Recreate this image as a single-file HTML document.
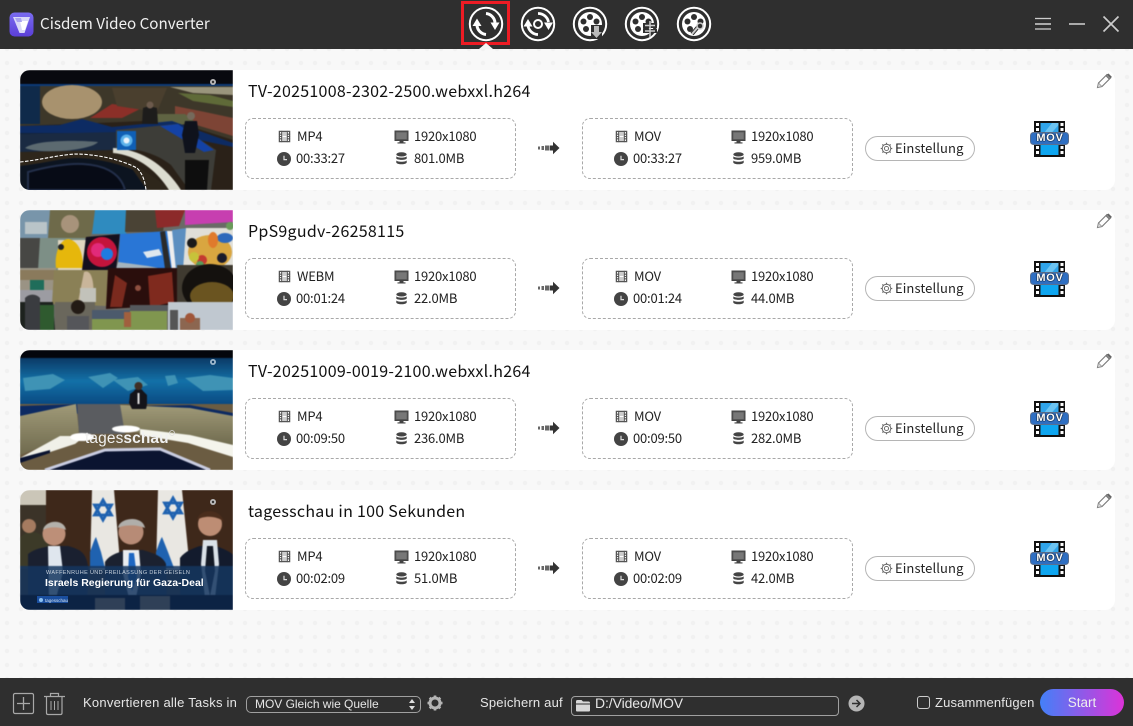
<!DOCTYPE html>
<html><head><meta charset="utf-8"><style>
*{box-sizing:border-box;margin:0;padding:0}
html,body{width:1133px;height:726px;overflow:hidden}
body{position:relative;font-family:"Noto Sans CJK SC","Liberation Sans",sans-serif;color:#222;
background-color:#f8f8f8;background-image:radial-gradient(circle,#f1f1f1 2px,transparent 2.5px);background-size:14px 14px}
.a{position:absolute;white-space:nowrap}
.top{position:absolute;left:0;top:0;width:1133px;height:49px;background:#2f2f2f}
.bot{position:absolute;left:0;top:678px;width:1133px;height:48px;background:#2f2f2f}
.row{position:absolute;left:20px;width:1095px;height:120px;background:#fff;border-radius:10px}
.th{position:absolute;left:0;top:0;width:213px;height:120px;border-radius:10px 0 0 10px;overflow:hidden}
.th svg{display:block}
.bl{filter:blur(.55px)}
.t{position:absolute;left:228px;top:8px;font-size:16px;line-height:24px;color:#111;white-space:nowrap;letter-spacing:.27px}
.box{position:absolute;top:48px;width:271px;height:61px;border:1px dashed #a8a8a8;border-radius:8px}
.i{position:absolute;font-size:13px;line-height:18px;color:#222;white-space:nowrap;letter-spacing:-.2px}
.ic{position:absolute}
.btn{position:absolute;left:845px;top:66px;width:110px;height:25px;border:1px solid #b5b5b5;border-radius:13px;font-size:13px;line-height:22px;padding-left:29px;color:#222;letter-spacing:.1px}
.bt{position:absolute;font-family:"Liberation Sans",sans-serif;font-size:13px;line-height:16px;color:#e6e6e6;white-space:nowrap}
.mv{position:absolute;left:1010px;top:61px;width:40px;text-align:center;font:bold 11px/14px "Liberation Sans",sans-serif;color:#fff;letter-spacing:.7px;text-shadow:0 0 1.500px #000,0 0 1px #000}
</style></head><body>
<svg width="0" height="0" style="position:absolute"><defs>
<symbol id="film" viewBox="0 0 14 14"><path d="M1.500 1.500h11v11h-11z" fill="none" stroke="#555" stroke-width="1.400"/><path d="M1 4.500h3M1 7h3M1 9.500h3M10 4.500h3M10 7h3M10 9.500h3" stroke="#555" stroke-width="1.200"/><path d="M4 1v12M10 1v12" stroke="#555" stroke-width="1.200"/><path d="M4.700 2.200h4.600v4.200H4.700zM4.700 7.600h4.600v4.200H4.700z" fill="#ccc"/></symbol>
<symbol id="clock" viewBox="0 0 14 14"><circle cx="7" cy="7" r="7" fill="#444"/><path d="M7 3.800V7.600H10" stroke="#ddd" stroke-width="1.200" fill="none"/></symbol>
<symbol id="mon" viewBox="0 0 15 14"><path d="M1 1h13v9.500H1z" fill="#555" stroke="#444"/><path d="M2.300 2.400h10.400v6.600H2.300z" fill="#777"/><path d="M5.500 11h4v1.400h2V13.500h-8v-1.100h2z" fill="#444"/></symbol>
<symbol id="db" viewBox="0 0 14 14"><ellipse cx="7" cy="2.600" rx="5.600" ry="2.300" fill="#444"/><path d="M1.400 4.600C2.500 6.600 11.500 6.600 12.600 4.600V7C11.500 9 2.500 9 1.400 7zM1.400 9C2.500 11 11.500 11 12.600 9V11.400C11.500 13.800 2.500 13.800 1.400 11.400z" fill="#444"/></symbol>
<symbol id="arr" viewBox="0 0 22 14"><path d="M0 5.500h2v3H0zM3.500 5h2.500v4H3.500zM7 4.500h4.500V9.500H7z" fill="#666"/><path d="M12 4.500h3V0.800L21.500 7 15 13.200V9.500h-3z" fill="#333"/></symbol>
<symbol id="gear" viewBox="0 0 14 14"><circle cx="7" cy="7" r="4.600" fill="none" stroke="#666" stroke-width="1"/><circle cx="7" cy="7" r="2.200" fill="none" stroke="#666" stroke-width="1"/><path d="M7 .8v1.700M7 11.500v1.700M.8 7h1.700M11.500 7h1.700M2.600 2.600l1.200 1.200M10.200 10.200l1.200 1.200M2.600 11.400l1.200-1.200M10.200 3.800l1.200-1.200" stroke="#666" stroke-width="1.300"/></symbol>
<symbol id="pen" viewBox="0 0 17 16"><path d="M1.500 14.500l1-4.500 8.500-8.500 3.500 3.500-8.500 8.500z" fill="#fff" stroke="#777" stroke-width="1.100"/><path d="M11 1.500l1.500-1 3.500 3.500-1.500 1z" fill="#666"/><path d="M10 2.500l3.500 3.500" stroke="#777" stroke-width="1.500"/><path d="M1.500 14.500l1-4.500 3.500 3.500z" fill="#ddd" stroke="#888" stroke-width=".7"/></symbol>
<symbol id="mov" viewBox="0 0 40 38"><rect x="4" y="1" width="31" height="36" fill="#111"/><rect x="10.500" y="3" width="18" height="10" fill="#2fa4ea"/><path d="M14 13l8-10h6.500v2l-7 8z" fill="#6cc4f2"/><rect x="10.500" y="24" width="18" height="11" fill="#0ea5ef"/><path d="M6 3h3v3H6zM6 8h3v3H6zM30.500 3h3v3h-3zM30.500 8h3v3h-3zM6 26h3v3H6zM6 31h3v3H6zM30.500 26h3v3h-3zM30.500 31h3v3h-3z" fill="#fff"/><rect x=".5" y="12.500" width="38" height="12" rx="3" fill="#2f6fc2" stroke="#5a6f8f"/></symbol>
</defs></svg>

<div class="top"></div>
<svg class="a" style="left:9px;top:12px" width="25" height="25" viewBox="0 0 25 25"><defs><linearGradient id="lg" x1="0" y1="0" x2="0" y2="1"><stop offset="0" stop-color="#7a6cf0"/><stop offset="1" stop-color="#5b3fd8"/></linearGradient></defs><rect x=".5" y=".5" width="24" height="24" rx="5" fill="url(#lg)"/><path d="M4 5h17l-5.500 16h-5z" fill="#d9d9f8"/><path d="M11 9h8l-3 9h-3z" fill="#fff"/><path d="M6 6h6l1 4-5 0z" fill="#a9a4f0"/></svg>
<div class="a" style="left:40px;top:10px;font-size:15.200px;line-height:26px;color:#f0f0f0">Cisdem Video Converter</div>

<div class="a" style="left:461px;top:1px;width:49px;height:44px;border:3px solid #ed1c24"></div>
<svg class="a" style="left:468px;top:6px" width="244" height="36" viewBox="0 0 244 36" fill="none" stroke="#fff">
<circle cx="18" cy="18" r="16.200" stroke-width="2"/>
<path d="M9 19.500A10 10 0 0 0 18 28.500" stroke-width="3"/><path d="M9 12.500l-4.500 7.500h9z" fill="#fff" stroke="none"/>
<path d="M18 7.500A10 10 0 0 1 27 16.500" stroke-width="3"/><path d="M27 24l-4.500-7.500h9z" fill="#fff" stroke="none"/>
<circle cx="70" cy="18" r="16.200" stroke-width="2"/><circle cx="70" cy="18" r="4" stroke-width="2"/>
<path d="M60 20A10.500 10.500 0 0 0 70 28.500" stroke-width="2.800"/><path d="M60 13l-4.500 7.500h9z" fill="#fff" stroke="none"/>
<path d="M70 7.500A10.500 10.500 0 0 1 80.500 16" stroke-width="2.800"/><path d="M80.500 24l-4.500-7.500h9z" fill="#fff" stroke="none"/>
<circle cx="122" cy="18" r="16.200" stroke-width="2"/><circle cx="122" cy="18" r="12" fill="#fff" stroke="none"/><g fill="#2f2f2f" stroke="none"><circle cx="122" cy="11" r="3"/><circle cx="115.500" cy="15.500" r="3"/><circle cx="128.500" cy="15.500" r="3"/><circle cx="118" cy="23" r="3"/><circle cx="126" cy="23" r="3"/></g>
<path d="M123 19h11v14h-11z" fill="#2f2f2f" stroke="none"/><path d="M126 20h5v6h3l-5.500 6-5.500-6h3z" fill="#bbb" stroke="none"/>
<circle cx="174" cy="18" r="16.200" stroke-width="2"/><circle cx="174" cy="18" r="12" fill="#fff" stroke="none"/><g fill="#2f2f2f" stroke="none"><circle cx="174" cy="11" r="3"/><circle cx="167.500" cy="15.500" r="3"/><circle cx="180.500" cy="15.500" r="3"/><circle cx="170" cy="23" r="3"/><circle cx="178" cy="23" r="3"/></g>
<path d="M175 17h14v5h-14zM175 23h14v4h-14z" fill="#2f2f2f" stroke="none"/><path d="M182 15v16M177 19.500h10M177 25h10" stroke="#ccc" stroke-width="1.500"/>
<circle cx="226" cy="18" r="16.200" stroke-width="2"/><circle cx="226" cy="18" r="12" fill="#fff" stroke="none"/><g fill="#2f2f2f" stroke="none"><circle cx="226" cy="11" r="3"/><circle cx="219.500" cy="15.500" r="3"/><circle cx="232.500" cy="15.500" r="3"/><circle cx="222" cy="23" r="3"/></g>
<path d="M224 28l6-7" stroke="#2f2f2f" stroke-width="4"/><path d="M224 28l6-7" stroke="#ccc" stroke-width="2"/><circle cx="232" cy="20" r="3" stroke="#ccc" stroke-width="1.500" fill="#2f2f2f"/>
</svg>
<svg class="a" style="left:479px;top:43px" width="14" height="6"><path d="M0 6L7 0l7 6z" fill="#f4f4f4"/></svg>
<svg class="a" style="left:1030px;top:14px" width="95" height="20" viewBox="0 0 95 20" fill="none" stroke="#bbb">
<path d="M5 4.500h16" stroke-width="1.300" stroke="#ccc"/><path d="M5 10h16" stroke-width="2" stroke="#aaa"/><path d="M5 15h16" stroke-width="1.300" stroke="#ccc"/>
<path d="M39 10h16" stroke-width="2" stroke="#aaa"/><path d="M73.500 2.500l15 15M88.500 2.500l-15 15" stroke-width="1.700" stroke="#ccc"/></svg>

<!-- ROW 1 -->
<div class="row" style="top:70px">
<div class="th"><svg width="213" height="120" viewBox="0 0 213 120"><g class="bl">
<rect width="213" height="120" fill="#2a2118"/><rect width="213" height="15" fill="#08090f"/><rect y="14" width="213" height="2" fill="#0c3a78"/>
<path d="M0 16h213v54L150 50 0 56z" fill="#3d3729"/>
<rect y="16" width="20" height="38" fill="#0f2a4a"/>
<ellipse cx="52" cy="32" rx="30" ry="17" fill="#a8926e"/><path d="M70 48l22-14 30 4-20 10z" fill="#8b2f28"/><path d="M92 18l55 0-10 24-40-6z" fill="#4a3f2e"/>
<path d="M150 17h63v8l-40-2z" fill="#9a957d"/><path d="M158 23l32 2 23 6v6l-40-6z" fill="#5f6a38"/><path d="M155 36l30 6 28 6v18l-40-12-18-6z" fill="#7d4435"/>
<path d="M125 44l40 0 10 8-30 6z" fill="#5f6342"/>
<path d="M0 56l40-1 22-6 30 8 60-6 61 22v4L140 62 0 64z" fill="#0d2b63"/>
<rect y="63" width="98" height="20" fill="#12223a"/>
<path d="M0 64l100-2-3 18-97 2z" fill="#1a2a42"/><path d="M5 78c10-8 50-8 73-6-6 8-55 13-73 6z" fill="#5c6a70"/>
<path d="M0 82l93-2 60 40H0z" fill="#2e261b"/>
<path d="M96 60l60-6 40 26-5 40h-22l-18-25c-15-12-35-17-55-17z" fill="#3d3d38"/><path d="M140 56l18-2 36 26-10 2z" fill="#1442a5"/>
<path d="M93 78c25 1 50 14 68 42h-12c-14-22-34-35-56-37z" fill="#dcdcd0"/>
<path d="M165 90h24l-2 30h-22z" fill="#0e0e0e"/>
<rect x="97" y="61" width="19" height="19" fill="#0f5fb5"/><circle cx="106.500" cy="70.500" r="6" fill="#5cb2ea"/><circle cx="106.500" cy="70.500" r="3" fill="#e8f3fb"/>
<path d="M123 38l6-2 8 2 1 16h-16z" fill="#1d1c1b"/><circle cx="130" cy="35" r="3.500" fill="#6c5a4c"/>
<path d="M165 51h12l2 14-4 18h-10l-3-18z" fill="#0f121c"/><circle cx="171" cy="46" r="4" fill="#756a5c"/>
<path d="M0 96c20-2 38-7 55-8 20 0 42 5 58 12l14 20H0z" fill="#0c1420"/>
<path d="M8 102c18-5 40-9 55-8 18 1 37 7 42 26H8z" fill="#070b16" stroke="#232f4a" stroke-width="2"/>
</g>
<path d="M0 92c20-2 38-7 55-8 20 0 45 5 62 14 6 6 8 14 9 22" fill="none" stroke="#fff" stroke-width="1.100" stroke-dasharray="3.500 1.500"/>
<circle cx="193" cy="12" r="3" fill="#b8b8b8"/><circle cx="193" cy="12" r="1.200" fill="#333"/>
</svg></div>
<div class="t">TV-20251008-2302-2500.webxxl.h264</div>
<svg class="ic" style="left:1076px;top:3px" width="17" height="16"><use href="#pen"/></svg>
<div class="box" style="left:225px"></div><div class="box" style="left:562px"></div>
<svg class="ic" style="left:258px;top:60px" width="13" height="13"><use href="#film"/></svg><div class="i" style="left:277px;top:57px">MP4</div>
<svg class="ic" style="left:374px;top:60px" width="15" height="14"><use href="#mon"/></svg><div class="i" style="left:394px;top:57px">1920x1080</div>
<svg class="ic" style="left:257px;top:82px" width="14" height="14"><use href="#clock"/></svg><div class="i" style="left:276px;top:79px">00:33:27</div>
<svg class="ic" style="left:375px;top:82px" width="13" height="13"><use href="#db"/></svg><div class="i" style="left:394px;top:79px">801.0MB</div>
<svg class="ic" style="left:518px;top:71px" width="22" height="14"><use href="#arr"/></svg>
<svg class="ic" style="left:595px;top:60px" width="13" height="13"><use href="#film"/></svg><div class="i" style="left:614px;top:57px">MOV</div>
<svg class="ic" style="left:711px;top:60px" width="15" height="14"><use href="#mon"/></svg><div class="i" style="left:731px;top:57px">1920x1080</div>
<svg class="ic" style="left:594px;top:82px" width="14" height="14"><use href="#clock"/></svg><div class="i" style="left:613px;top:79px">00:33:27</div>
<svg class="ic" style="left:712px;top:82px" width="13" height="13"><use href="#db"/></svg><div class="i" style="left:731px;top:79px">959.0MB</div>
<div class="btn">Einstellung<svg class="ic" style="left:14px;top:5px" width="13" height="13"><use href="#gear"/></svg></div>
<svg class="ic" style="left:1010px;top:50px" width="40" height="38"><use href="#mov"/></svg><div class="mv">MOV</div>
</div>

<!-- ROW 2 -->
<div class="row" style="top:210px">
<div class="th"><svg width="213" height="120" viewBox="0 0 213 120"><g class="bl">
<rect width="213" height="120" fill="#6a6a66"/>
<path d="M0 0h32v28H0z" fill="#7895aa"/><path d="M5 12h22v12H5z" fill="#b9c4c8"/><path d="M30 0h48l-8 28H28z" fill="#6e6a4a"/><ellipse cx="50" cy="14" rx="9" ry="9" fill="#a8937b"/><path d="M75 0h33l-2 24H72z" fill="#2f8bbf"/><path d="M106 0h40l-3 22h-38z" fill="#4a4335"/><path d="M135 0h30l-6 16-22 2z" fill="#8c2a2a"/><path d="M165 0h48v12l-48 3z" fill="#c73fb0"/>
<path d="M0 28h22l-3 32H0z" fill="#474744"/><path d="M20 28h45v32H18z" fill="#7d8f86"/><path d="M38 30h28v30H38z" fill="#dfd6c0"/><path d="M36 58c-2-16 5-30 13-29 11 3 14 16 14 29z" fill="#e6b70c"/><circle cx="41" cy="37" r="3" fill="#222"/>
<path d="M66 27l34-3-4 36-34 0z" fill="#14101e"/><circle cx="82" cy="42" r="15" fill="#c4143c"/><circle cx="78" cy="40" r="7" fill="#e12a7a"/><circle cx="87" cy="44" r="6" fill="#1f7be0"/>
<path d="M100 24l48-3 4 39H98z" fill="#2976d6"/><path d="M98 52l30 4 20 4H96z" fill="#a5b4bd"/><path d="M123 42l16-3 3 6-15 3z" fill="#dfe8ee"/><path d="M140 22l5-1 6 38h-6z" fill="#2a2a2a"/><path d="M147 21h6l4 39h-5z" fill="#eee"/><path d="M152 20l15-2-2 42h-9z" fill="#5c8fc0"/>
<path d="M166 18h47v42h-50z" fill="#e0dfd8"/><ellipse cx="190" cy="42" rx="22" ry="17" fill="#d9a640"/><ellipse cx="205" cy="28" rx="8" ry="5" fill="#2d68bb"/><circle cx="172" cy="33" r="5" fill="#1a1a1a"/><circle cx="182" cy="50" r="5" fill="#c43a30"/><circle cx="202" cy="48" r="5" fill="#1a1a2a"/><ellipse cx="193" cy="30" rx="5" ry="8" fill="#e07a2c"/><circle cx="174" cy="47" r="5" fill="#c7c33a"/><circle cx="180" cy="55" r="4" fill="#5a9a5a"/><circle cx="210" cy="16" r="4" fill="#6a9a5a"/>
<path d="M0 58h36v36H0z" fill="#9a9384"/><path d="M0 60h36v10H0z" fill="#8a7a5c"/><path d="M10 70h14v10H10z" fill="#1f6d5a"/><path d="M0 80h36v14H0z" fill="#9c9ca2"/>
<path d="M34 60h56l-4 36-54-2z" fill="#8a8056"/><path d="M64 62c7-3 11 8 9 30H58z" fill="#c9b59a"/><path d="M60 78h16v14H60z" fill="#c2c2ba"/>
<path d="M88 58h72v37l-74 4z" fill="#2a0e0c"/><path d="M95 65l12 8-5 24H90z" fill="#7a2a1e"/><path d="M128 66l24-4 2 30-24 5z" fill="#7f2a1e"/><circle cx="118" cy="78" r="3" fill="#8f5040"/>
<path d="M157 55h56v50h-56z" fill="#3f3a30"/><ellipse cx="190" cy="78" rx="28" ry="24" fill="#14110e"/><ellipse cx="192" cy="86" rx="22" ry="14" fill="#6a5420"/>
<path d="M0 92h33l2 28H0z" fill="#1d221e"/><path d="M5 88a10 10 0 0 1 15 0v32H5z" fill="#3a3c40"/><path d="M20 95h14v25H20z" fill="#2f5a2f"/>
<path d="M35 92h40v28H35z" fill="#6a675c"/><circle cx="58" cy="97" r="7" fill="#231b15"/><path d="M47 106h22v14H47z" fill="#55565a"/>
<path d="M72 100h75v20H72z" fill="#80964f"/><path d="M72 100h38v9H72z" fill="#4c5a6c"/><path d="M110 95h40v6h-40z" fill="#55585c"/><rect x="104" y="102" width="7" height="15" fill="#a0603e"/>
<path d="M148 92h65v28h-65z" fill="#c0c8d0"/><path d="M150 100h8v20h-8z" fill="#555"/><path d="M160 108h20v12h-20z" fill="#8c6650"/><circle cx="170" cy="108" r="5" fill="#a0563a"/>
</g></svg></div>
<div class="t">PpS9gudv-26258115</div>
<svg class="ic" style="left:1076px;top:3px" width="17" height="16"><use href="#pen"/></svg>
<div class="box" style="left:225px"></div><div class="box" style="left:562px"></div>
<svg class="ic" style="left:258px;top:60px" width="13" height="13"><use href="#film"/></svg><div class="i" style="left:277px;top:57px">WEBM</div>
<svg class="ic" style="left:374px;top:60px" width="15" height="14"><use href="#mon"/></svg><div class="i" style="left:394px;top:57px">1920x1080</div>
<svg class="ic" style="left:257px;top:82px" width="14" height="14"><use href="#clock"/></svg><div class="i" style="left:276px;top:79px">00:01:24</div>
<svg class="ic" style="left:375px;top:82px" width="13" height="13"><use href="#db"/></svg><div class="i" style="left:394px;top:79px">22.0MB</div>
<svg class="ic" style="left:518px;top:71px" width="22" height="14"><use href="#arr"/></svg>
<svg class="ic" style="left:595px;top:60px" width="13" height="13"><use href="#film"/></svg><div class="i" style="left:614px;top:57px">MOV</div>
<svg class="ic" style="left:711px;top:60px" width="15" height="14"><use href="#mon"/></svg><div class="i" style="left:731px;top:57px">1920x1080</div>
<svg class="ic" style="left:594px;top:82px" width="14" height="14"><use href="#clock"/></svg><div class="i" style="left:613px;top:79px">00:01:24</div>
<svg class="ic" style="left:712px;top:82px" width="13" height="13"><use href="#db"/></svg><div class="i" style="left:731px;top:79px">44.0MB</div>
<div class="btn">Einstellung<svg class="ic" style="left:14px;top:5px" width="13" height="13"><use href="#gear"/></svg></div>
<svg class="ic" style="left:1010px;top:50px" width="40" height="38"><use href="#mov"/></svg><div class="mv">MOV</div>
</div>

<!-- ROW 3 -->
<div class="row" style="top:350px">
<div class="th"><svg width="213" height="120" viewBox="0 0 213 120"><defs><linearGradient id="w3" x1="0" y1="0" x2="0" y2="1"><stop offset="0" stop-color="#0b3a66"/><stop offset=".5" stop-color="#1371a8"/><stop offset="1" stop-color="#0a4a82"/></linearGradient><linearGradient id="d3" x1="0" y1="0" x2="0" y2="1"><stop offset="0" stop-color="#a09a78"/><stop offset="1" stop-color="#6f6a4e"/></linearGradient></defs><g class="bl">
<rect width="213" height="120" fill="#6b5c42"/><rect width="213" height="8" fill="#04060c"/><rect y="8" width="213" height="46" fill="url(#w3)"/>
<path d="M3 28l30-4 12 6-15 9-25 2zM68 27l22-4 8 5-15 10zM93 30l25-3 10 8-20 6zM165 28l25-3 23 3v12l-30 1zM145 26l10-1 3 8-10 3z" fill="#3f93b5"/>
<path d="M0 56l60-2 60 2 50-1 43 8v8L150 60 0 66z" fill="#0c2a62"/>
<path d="M0 66l56-12 3 28L0 105z" fill="url(#d3)"/><path d="M100 55l70 3 43 8v30L100 80z" fill="url(#d3)"/>
<path d="M57 54h43l5 30H59z" fill="#5a5c60"/>
<path d="M0 108l40-22 25 0-10 8L0 112z" fill="#f0f0e8"/><ellipse cx="62" cy="87" rx="12" ry="4" fill="#fff"/><ellipse cx="106" cy="79" rx="14" ry="3.500" fill="#fff"/>
<path d="M120 79l50 6 43 10v12l-45-14-48-8z" fill="#f4f4ec"/>
<path d="M0 112l55-18 50-2 60 4 48 18v6H0z" fill="#6b5c42"/>
<path d="M0 108l30-8 0 3-30 10zM25 120l60-20 55-1 50 21z" fill="#0b1430"/><path d="M25 120l60-20 55-1 50 21" fill="none" stroke="#c9cce0" stroke-width="3"/>
<path d="M114 41c1-3 8-3 9 0l4 4v10l-1 4h-14l-3-6 1-9z" fill="#14141a"/><circle cx="118.500" cy="36" r="4" fill="#3f2f26"/><path d="M117.500 43h2v11h-2z" fill="#ddd"/>
</g>
<circle cx="193" cy="12" r="3" fill="#9fb8cc"/><circle cx="193" cy="12" r="1.200" fill="#0c3a66"/>
<text x="65" y="93" font-family="Liberation Sans,sans-serif" font-size="15.500" fill="#f0f0f0" letter-spacing=".1">tages<tspan font-weight="bold">schau</tspan></text>
<circle cx="152" cy="83" r="2.500" fill="none" stroke="#dfdfdf" stroke-width=".7"/>
</svg></div>
<div class="t">TV-20251009-0019-2100.webxxl.h264</div>
<svg class="ic" style="left:1076px;top:3px" width="17" height="16"><use href="#pen"/></svg>
<div class="box" style="left:225px"></div><div class="box" style="left:562px"></div>
<svg class="ic" style="left:258px;top:60px" width="13" height="13"><use href="#film"/></svg><div class="i" style="left:277px;top:57px">MP4</div>
<svg class="ic" style="left:374px;top:60px" width="15" height="14"><use href="#mon"/></svg><div class="i" style="left:394px;top:57px">1920x1080</div>
<svg class="ic" style="left:257px;top:82px" width="14" height="14"><use href="#clock"/></svg><div class="i" style="left:276px;top:79px">00:09:50</div>
<svg class="ic" style="left:375px;top:82px" width="13" height="13"><use href="#db"/></svg><div class="i" style="left:394px;top:79px">236.0MB</div>
<svg class="ic" style="left:518px;top:71px" width="22" height="14"><use href="#arr"/></svg>
<svg class="ic" style="left:595px;top:60px" width="13" height="13"><use href="#film"/></svg><div class="i" style="left:614px;top:57px">MOV</div>
<svg class="ic" style="left:711px;top:60px" width="15" height="14"><use href="#mon"/></svg><div class="i" style="left:731px;top:57px">1920x1080</div>
<svg class="ic" style="left:594px;top:82px" width="14" height="14"><use href="#clock"/></svg><div class="i" style="left:613px;top:79px">00:09:50</div>
<svg class="ic" style="left:712px;top:82px" width="13" height="13"><use href="#db"/></svg><div class="i" style="left:731px;top:79px">282.0MB</div>
<div class="btn">Einstellung<svg class="ic" style="left:14px;top:5px" width="13" height="13"><use href="#gear"/></svg></div>
<svg class="ic" style="left:1010px;top:50px" width="40" height="38"><use href="#mov"/></svg><div class="mv">MOV</div>
</div>

<!-- ROW 4 -->
<div class="row" style="top:490px">
<div class="th"><svg width="213" height="120" viewBox="0 0 213 120"><g class="bl">
<rect width="213" height="120" fill="#3e281a"/><rect width="26" height="15" fill="#cbc6b8"/><rect y="15" width="26" height="40" fill="#3b3328"/>
<path d="M72 0h22l5 60v20H70z" fill="#e9e7e2"/><path d="M70 78V62c3-8 4-12 6-15l5 15 4 16z" fill="#1f62b0"/>
<path d="M138 0h24l6 60v20h-32z" fill="#e9e7e2"/><path d="M136 78V62c3-8 4-12 6-15l6 15 6 16z" fill="#1f62b0"/>
<g fill="none" stroke="#1f62b0" stroke-width="2.800"><path d="M83 10l8.500 15h-17zM83 30l-8.500-15h17z"/><path d="M153 8l8.500 15h-17zM153 28l-8.500-15h17z"/></g>
<path d="M0 48c5-8 18-8 25 0l4 6-8 25H0z" fill="#3c3a28"/><circle cx="9" cy="36" r="7" fill="#a57b60"/>
<path d="M8 64c8-6 14-6 22-8l18 0c10 3 18 5 20 20l-1 44H8z" fill="#1a2030"/><circle cx="34" cy="44" r="11.500" fill="#bd8f78"/><path d="M23 40c2-10 21-12 23 0-5-3-17-4-23 0z" fill="#b3b0aa"/><path d="M28 56h12l3 26-8 30h-6z" fill="#dfe6ee"/>
<path d="M85 72c5-8 15-10 22-12h16c10 3 20 6 23 14l1 46H85z" fill="#1b2130"/><circle cx="111" cy="42" r="12.500" fill="#b78b76"/><path d="M98 38c1-11 25-13 27 0-6-3-20-4-27 0z" fill="#b0aeaa"/><path d="M103 60h16l2 24-6 28h-5l-7-28z" fill="#e9ecf0"/><path d="M109 63h5l3 24-5 14-4-14z" fill="#1d66c2"/>
<path d="M160 68c5-7 14-10 20-12h16c8 3 15 6 17 9v55h-53z" fill="#131b2d"/><circle cx="190" cy="34" r="12" fill="#bd8d74"/><path d="M177 30c2-12 24-12 27 2-6-6-20-7-27-2z" fill="#4a2d1c"/><path d="M183 50h14l2 24-4 34h-10l-4-34z" fill="#dbe2e8"/><path d="M187 56h6l2 25-5 25-5-25z" fill="#141a26"/>
<rect y="76" width="213" height="29" fill="#15365f" opacity=".85"/><rect y="105" width="213" height="15" fill="#0c2344"/>
<path d="M75 108h30v12H75zM120 106h30v14h-30z" fill="#2f4057"/>
</g>
<text x="26" y="84" font-family="Liberation Sans,sans-serif" font-size="5.500" fill="#c7d1dc" letter-spacing=".35">WAFFENRUHE UND FREILASSUNG DER GEISELN</text>
<text x="25" y="96" font-family="Liberation Sans,sans-serif" font-weight="bold" font-size="10.500" fill="#fff">Israels Regierung für Gaza-Deal</text>
<rect x="17" y="106" width="31" height="7" fill="#1a4e9e"/><text x="25" y="112" font-family="Liberation Sans,sans-serif" font-size="4.500" fill="#cfe0f0">tagesschau</text><circle cx="21" cy="110" r="2" fill="#8cc0f0"/>
<circle cx="193" cy="12" r="3" fill="#bbb"/><circle cx="193" cy="12" r="1.200" fill="#333"/>
</svg></div>
<div class="t">tagesschau in 100 Sekunden</div>
<svg class="ic" style="left:1076px;top:3px" width="17" height="16"><use href="#pen"/></svg>
<div class="box" style="left:225px"></div><div class="box" style="left:562px"></div>
<svg class="ic" style="left:258px;top:60px" width="13" height="13"><use href="#film"/></svg><div class="i" style="left:277px;top:57px">MP4</div>
<svg class="ic" style="left:374px;top:60px" width="15" height="14"><use href="#mon"/></svg><div class="i" style="left:394px;top:57px">1920x1080</div>
<svg class="ic" style="left:257px;top:82px" width="14" height="14"><use href="#clock"/></svg><div class="i" style="left:276px;top:79px">00:02:09</div>
<svg class="ic" style="left:375px;top:82px" width="13" height="13"><use href="#db"/></svg><div class="i" style="left:394px;top:79px">51.0MB</div>
<svg class="ic" style="left:518px;top:71px" width="22" height="14"><use href="#arr"/></svg>
<svg class="ic" style="left:595px;top:60px" width="13" height="13"><use href="#film"/></svg><div class="i" style="left:614px;top:57px">MOV</div>
<svg class="ic" style="left:711px;top:60px" width="15" height="14"><use href="#mon"/></svg><div class="i" style="left:731px;top:57px">1920x1080</div>
<svg class="ic" style="left:594px;top:82px" width="14" height="14"><use href="#clock"/></svg><div class="i" style="left:613px;top:79px">00:02:09</div>
<svg class="ic" style="left:712px;top:82px" width="13" height="13"><use href="#db"/></svg><div class="i" style="left:731px;top:79px">42.0MB</div>
<div class="btn">Einstellung<svg class="ic" style="left:14px;top:5px" width="13" height="13"><use href="#gear"/></svg></div>
<svg class="ic" style="left:1010px;top:50px" width="40" height="38"><use href="#mov"/></svg><div class="mv">MOV</div>
</div>

<!-- BOTTOM -->
<div class="bot"></div>
<svg class="a" style="left:12px;top:692px" width="56" height="24" viewBox="0 0 56 24" fill="none" stroke="#a8a8a8">
<rect x="1.500" y="1.500" width="20" height="20" rx="1.500" stroke-width="1.200"/><path d="M11.500 5v13M5 11.500h13" stroke-width="1.300"/>
<path d="M32 4.500h21M38.500 4.500V1.500h8v3" stroke-width="1.200"/><path d="M34.500 4.500v16.500q0 1.500 1.500 1.500h12.500q1.500 0 1.500-1.500V4.500" stroke-width="1.200"/><path d="M39 9v9M42.500 9v9M46 9v9" stroke-width="1"/></svg>
<div class="bt" style="left:83px;top:695px;letter-spacing:.24px">Konvertieren alle Tasks in</div>
<div class="a" style="left:246px;top:696px;width:175px;height:17px;border:1px solid #a0a0a0;border-radius:5px"></div>
<div class="bt" style="left:255px;top:696px;font-size:12px;letter-spacing:-.02px">MOV Gleich wie Quelle</div>
<svg class="a" style="left:408px;top:698px" width="8" height="13"><path d="M4 1l3 4H1zM4 12l3-4H1z" fill="#ddd"/></svg>
<svg class="a" style="left:427px;top:695px" width="16" height="16" viewBox="0 0 16 16"><circle cx="8" cy="8" r="5" fill="none" stroke="#b4b4b4" stroke-width="3"/><path d="M8 .5v3M8 12.500v3M.5 8h3M12.500 8h3M2.700 2.700l2.100 2.100M11.200 11.200l2.100 2.100M2.700 13.300l2.100-2.100M11.200 4.800l2.100-2.100" stroke="#b4b4b4" stroke-width="2.600"/></svg>
<div class="bt" style="left:480px;top:695px;letter-spacing:.2px">Speichern auf</div>
<div class="a" style="left:571px;top:696px;width:268px;height:20px;border:1px solid #a0a0a0;border-radius:4px"></div>
<svg class="a" style="left:576px;top:699px" width="14" height="13"><path d="M0 2.500q0-1.500 1.500-1.500h4l1.500 1.500h5.500q1.500 0 1.500 1.500v.5H0zM0 5.500h14v6q0 1-1 1H1q-1 0-1-1z" fill="#d8d8d8"/></svg>
<div class="bt" style="left:595px;top:695px;font-size:14px;letter-spacing:-.1px">D:/Video/MOV</div>
<svg class="a" style="left:848px;top:695px" width="17" height="17"><circle cx="8.500" cy="8.500" r="8" fill="#b5b5b5"/><path d="M4 8.500h8M8.500 5l3.500 3.500-3.500 3.500" stroke="#2f2f2f" stroke-width="1.500" fill="none"/></svg>
<div class="a" style="left:917px;top:696px;width:13px;height:13px;border:1px solid #ccc;border-radius:3px"></div>
<div class="bt" style="left:935px;top:695px;letter-spacing:.15px">Zusammenfügen</div>
<div class="a" style="left:1040px;top:689px;width:84px;height:27px;border-radius:14px;background:linear-gradient(90deg,#4380f8,#dc33d8);color:#eee;font:13.500px/27px 'Liberation Sans',sans-serif;text-align:center">Start</div>
</body></html>
